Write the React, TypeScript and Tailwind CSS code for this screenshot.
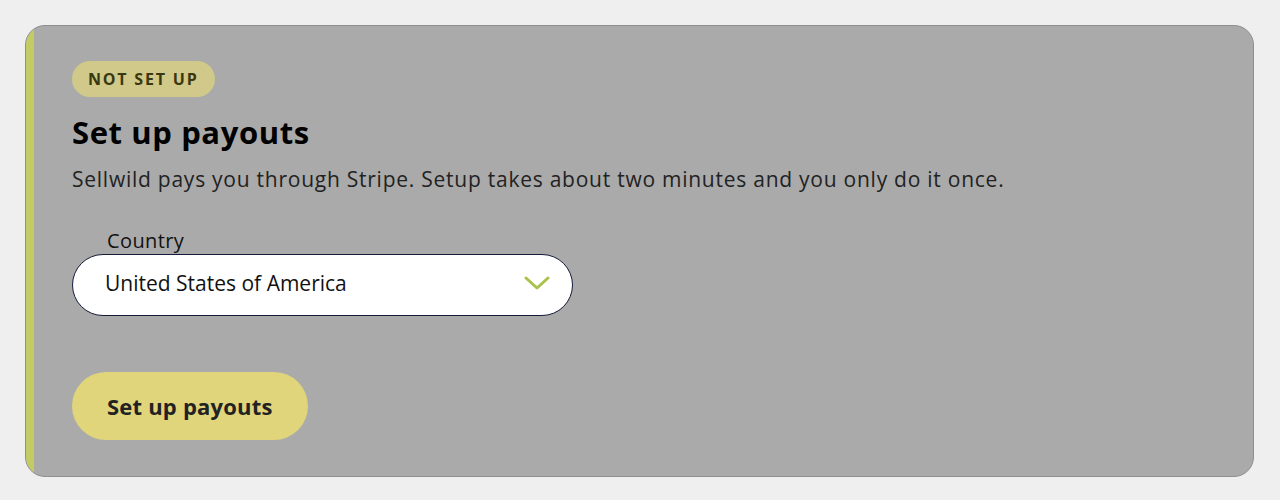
import React from "react";

export default function App() {
  return (
    <div className="min-h-[500px] w-[1280px] bg-[#efefef] p-[25px] pr-[26px]" style={{ fontFamily: "'Open Sans', sans-serif" }}>
      <div className="relative flex h-[452px] overflow-hidden rounded-[20px] border border-[#8f8f8f] bg-[#aaaaaa]">
        <div className="w-[8px] shrink-0 bg-[#c3cc63]" />
        <div className="flex flex-col items-start pl-[38px] pt-[35px]">
          <span className="rounded-full bg-[#d1c98a] px-[16px] py-[7px] text-[16px] font-bold tracking-[1.8px] text-[#3a3810] leading-[22px]">
            NOT SET UP
          </span>
          <h2 className="mt-[17px] text-[31px] font-bold leading-[36px] tracking-[0.6px] text-black">Set up payouts</h2>
          <p className="mt-[16px] text-[21px] leading-[26px] tracking-[0.75px] text-[#222222]">
            Sellwild pays you through Stripe. Setup takes about two minutes and you only do it once.
          </p>
          <label className="mt-[38px] pl-[35px] text-[20px] leading-[22px] tracking-[0.4px] text-[#111111]">Country</label>
          <div className="mt-[2px] flex h-[62px] w-[501px] items-center justify-between rounded-full border border-[#141a3a] bg-white pb-[4px] pl-[32px] pr-[22px]">
            <span className="text-[21px] leading-[28px] text-[#111111]">United States of America</span>
            <svg width="26" height="16" viewBox="0 0 26 16" fill="none">
              <path d="M2 3 L13 13 L24 3" stroke="#a9c24c" strokeWidth="3" strokeLinecap="round" strokeLinejoin="round" />
            </svg>
          </div>
          <button className="mt-[56px] h-[68px] rounded-full bg-[#e0d57a] px-[35px] text-[22px] font-bold tracking-[0.2px] text-[#222222]">
            Set up payouts
          </button>
        </div>
      </div>
    </div>
  );
}
